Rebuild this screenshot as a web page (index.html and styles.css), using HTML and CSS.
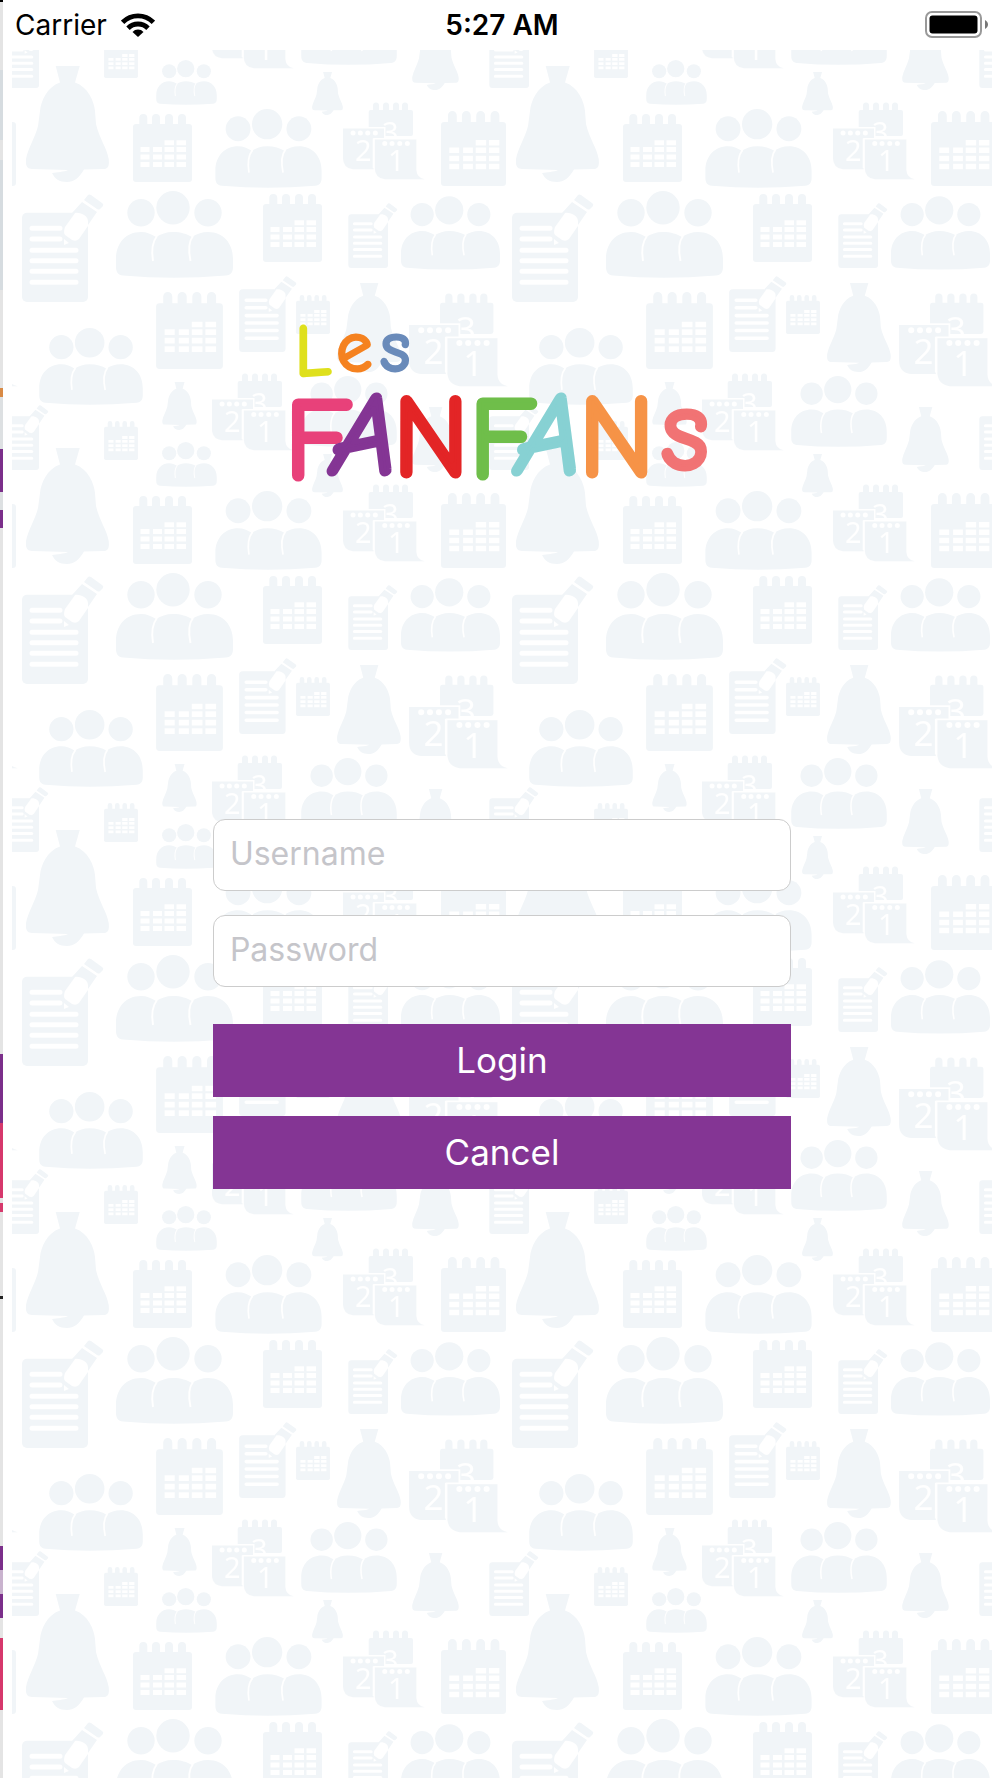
FILE: index.html
```html
<!DOCTYPE html>
<html lang="en">
<head>
<meta charset="utf-8">
<meta name="viewport" content="width=device-width, initial-scale=1">
<title>Les Fanfans - Login</title>
<link rel="stylesheet" href="styles.css">
</head>
<body>
<div class="previous-screen" aria-hidden="true"></div>
<div class="screen">
  <header class="status-bar">
    <div class="carrier">
      <span>Carrier</span>
      <svg class="wifi" viewBox="0 0 34 24" aria-hidden="true">
        <path d="M1.6 9.4A21.6 21.6 0 0 1 32.4 9.4M7 15.2A14 14 0 0 1 27 15.2" fill="none" stroke="#000" stroke-width="4.8"/>
        <path d="M11.500 19A7.4 7.4 0 0 1 22.500 19L17 24Z"/>
      </svg>
    </div>
    <time class="clock">5:27 AM</time>
    <svg class="battery" viewBox="0 0 64 28" aria-hidden="true">
      <rect x="1" y="1" width="55" height="25" rx="6" fill="none" stroke="#999" stroke-width="2"/>
      <rect x="4.500" y="4.500" width="48" height="18" rx="3"/>
      <path d="M60 9C64 11 64 16 60 18Z" fill="#777"/>
    </svg>
  </header>

  <main class="content">
    <svg class="wallpaper" aria-hidden="true">
      <defs>
        <symbol id="bell" viewBox="0 0 83 116">
          <path d="M29.700 0H53.700L49 16.500C62 21 68 35 69 45L70 58C73 72 81 82 82.700 93C83.500 100 82 103 78 103L58 103.500C53 112 48 116 41 116C33 116 29 113 26 107C31 106 38 106 42 104L6 103C1 103 -.5 100 0 93C2 82 9 72 12 60L14 45C15 35 21 21 34 16.500Z"/>
        </symbol>
        <symbol id="calendar" viewBox="0 0 59 68">
          <rect y="10" width="59" height="58" rx="3"/>
          <path d="M10.300 4V14M23 4V14M36 4V14M49 4V14" class="rings"/>
          <path d="M31.500 28.700H41M43.500 28.700H53M7.500 35.500H16.500M20 35.500H29M31.500 35.500H41M43.500 35.500H53M7.500 43H16.500M20 43H29M31.500 43H41M43.500 43H53M7.500 50.400H16.500M20 50.400H29M31.500 50.400H41M43.500 50.400H53" class="cells"/>
        </symbol>
        <symbol id="group" viewBox="0 0 117 87">
          <circle cx="25" cy="21.700" r="13.700"/>
          <circle cx="57" cy="16.700" r="16.700"/>
          <circle cx="92" cy="21.700" r="13.700"/>
          <path d="M0 76V68C0 52 10 41 25 41C31 41 35 43 40 46C45 43 50 41 57 41C65 41 71 43 76 46C80 43 86 41 92 41C107 41 117 52 117 68V76C117 81 115 84 110 84.500Q57 89 7 84.500C2 84 0 81 0 76Z"/>
          <path d="M41 45C37 50 35 58 37 70M77 45C73 50 72 58 74.500 70" class="gaps"/>
        </symbol>
        <symbol id="note" viewBox="0 0 82 108">
          <rect y="18.700" width="66" height="89.300" rx="5"/>
          <path d="M10 34.300H38M10 45H38M10 56.300H54M10 66.700H54M10 77.300H54M10 88.300H54" class="lines"/>
          <path d="M60 8L75 18L66 31L50 19ZM62 6L66 1Q67 0 69 1L80 9Q82 10 81 12L78 15Q77 16 75 15Z"/>
          <path d="M53 19C59 18 66 22 66 27V32L57 45Q54 48 50 46L43 41Q41 38 43 33ZM42 45L47 49L42 51Z" class="blank"/>
        </symbol>
        <symbol id="dates" viewBox="0 0 82 78">
          <rect x="25.700" y="8" width="44.300" height="26" rx="2"/>
          <path d="M33 3.500V12M43 3.500V12M53 3.500V12M62 3.500V12" class="rings small"/>
          <path d="M0 26.600H41V67.300H10Q0 66 0 56Z" class="page"/>
          <text x="39" y="41">3</text>
          <path d="M31.700 37.500H73.300V68Q74 76 81.700 77.300H42Q31.700 76 31.700 65Z" class="page"/>
          <path d="M10 31H10.100M17.300 31H17.400M24.700 31H24.800M32.300 31H32.400M41.700 41.500H41.800M49 41.500H49.100M56.700 41.500H56.800M64.300 41.500H64.400" class="dots"/>
          <text x="12" y="59">2</text>
          <path d="M30.700 66V36.500" class="gaps"/>
          <text x="45" y="68.500">1</text>
        </symbol>
        <pattern id="tile" width="490" height="382" patternUnits="userSpaceOnUse">
          <use href="#bell" x="14" y="16" width="83" height="116"/>
          <use href="#bell" x="300" y="22" width="31" height="43"/>
          <use href="#bell" x="400" y="-25" width="47" height="65"/>
          <use href="#bell" x="400" y="357" width="47" height="65"/>
          <use href="#bell" x="325" y="233" width="64" height="89"/>
          <use href="#bell" x="150" y="332" width="35" height="48"/>
          <use href="#calendar" x="121" y="64" width="59" height="68"/>
          <use href="#calendar" x="251" y="144" width="59" height="68"/>
          <use href="#calendar" x="429" y="61" width="65" height="75"/>
          <use href="#calendar" x="-61" y="61" width="65" height="75"/>
          <use href="#calendar" x="144" y="242" width="67" height="77"/>
          <use href="#calendar" x="92" y="-11" width="34" height="39"/>
          <use href="#calendar" x="92" y="371" width="34" height="39"/>
          <use href="#calendar" x="284" y="245" width="34" height="39"/>
          <use href="#group" x="144" y="10" width="61" height="45"/>
          <use href="#group" x="203" y="59" width="107" height="79"/>
          <use href="#group" x="104" y="141" width="117" height="87"/>
          <use href="#group" x="389" y="146" width="99" height="74"/>
          <use href="#group" x="27" y="278" width="104" height="77"/>
          <use href="#group" x="289" y="-56" width="96" height="71"/>
          <use href="#group" x="289" y="326" width="96" height="71"/>
          <use href="#note" x="10" y="144" width="82" height="108"/>
          <use href="#note" x="336" y="153" width="50" height="65"/>
          <use href="#note" x="227" y="226" width="58" height="76"/>
          <use href="#note" x="-13" y="-27" width="50" height="65"/>
          <use href="#note" x="-13" y="355" width="50" height="65"/>
          <use href="#note" x="477" y="-27" width="50" height="65"/>
          <use href="#note" x="477" y="355" width="50" height="65"/>
          <use href="#dates" x="331" y="52" width="82" height="78"/>
          <use href="#dates" x="397" y="243" width="99" height="94"/>
          <use href="#dates" x="-93" y="243" width="99" height="94"/>
          <use href="#dates" x="200" y="-59" width="82" height="78"/>
          <use href="#dates" x="200" y="323" width="82" height="78"/>
        </pattern>
      </defs>
      <rect width="100%" height="100%" fill="url(#tile)"/>
    </svg>

    <h1 class="logo">
      <svg viewBox="0 0 420 170" role="img" aria-label="Les Fanfans">
        <g class="logo-small">
          <text x="4" y="60" color="#dfe01d">L</text>
          <text x="45" y="56" color="#f58220">e</text>
          <text x="89" y="56" color="#6a8bba">s</text>
        </g>
        <g class="logo-large">
          <text x="-6" y="162" color="#e8417a">F</text>
          <text x="40" y="158" color="#843594" class="slanted">A</text>
          <text x="102" y="159" color="#e32526">N</text>
          <text x="178" y="161" color="#6fbe4a">F</text>
          <text x="224" y="158" color="#87d1d3" class="slanted">A</text>
          <text x="287" y="159" color="#f69347">N</text>
          <text x="369" y="152" color="#f17374" class="last">s</text>
        </g>
      </svg>
    </h1>

    <form class="login-form">
      <input class="field" type="text" name="username" placeholder="Username" aria-label="Username">
      <input class="field" type="password" name="password" placeholder="Password" aria-label="Password">
      <div class="actions">
        <button class="action" type="submit">Login</button>
        <button class="action" type="button">Cancel</button>
      </div>
    </form>
  </main>
</div>
</body>
</html>
```
FILE: styles.css
```css
* {
  box-sizing: border-box;
}

body {
  margin: 0;
  min-height: 100vh;
  display: grid;
  grid-template-columns: 3px 1fr;
  background: #fff;
  font-family: Inter, "Liberation Sans", sans-serif;
}

/* Edge of the screen that the login view slides over */
.previous-screen {
  background: linear-gradient(
    #000 2px, #e4e4e4 2px 70px,
    #d6dce0 70px 140px, #e4e4e4 140px 160px,
    #d6dce0 160px 290px, #e4e4e4 290px 388px,
    #d88a45 388px 397px, #dde0e2 397px 449px,
    #7b2f8a 449px 492px, #dde0e2 492px 510px,
    #7b2f8a 510px 528px, #e4e4e4 528px 1054px,
    #7b2f8a 1054px 1123px, #d6386c 1123px 1198px,
    #e4e4e4 1198px 1203px, #d6386c 1203px 1212px,
    #e4e4e4 1212px 1296px, #222 1296px 1299px,
    #e4e4e4 1299px 1546px, #7b2f8a 1546px 1570px,
    #c9b3ce 1570px 1594px, #7b2f8a 1594px 1618px,
    #e4e4e4 1618px 1638px, #d6386c 1638px 1710px,
    #e4e4e4 1710px
  );
}

.screen {
  display: flex;
  flex-direction: column;
}

.status-bar {
  height: 50px;
  padding: 0 11px 0 12px;
  display: grid;
  grid-template-columns: 1fr auto 1fr;
  align-items: center;
  font-size: 28px;
  line-height: 32px;
  color: #000;
}

.carrier {
  display: flex;
  align-items: center;
  gap: 14px;
}

.wifi {
  width: 34px;
  height: 24px;
}

.clock {
  font-weight: 600;
}

.battery {
  width: 64px;
  height: 28px;
  justify-self: end;
}

.content {
  position: relative;
  flex: 1;
  margin: 0 8px 0 9px;
  display: flex;
  flex-direction: column;
  align-items: center;
}

.wallpaper {
  position: absolute;
  inset: 0;
  width: 100%;
  height: 100%;
  z-index: -1;
  fill: #f1f5f8;
}

.wallpaper text {
  font: 29px "Noto Sans", sans-serif;
  fill: #fff;
}

.rings {
  stroke: #f1f5f8;
  stroke-width: 8;
  stroke-linecap: round;
}

.rings.small {
  stroke-width: 6;
}

.cells {
  stroke: #fff;
  stroke-width: 5;
}

.lines {
  stroke: #fff;
  stroke-width: 5;
  stroke-linecap: round;
}

.gaps {
  fill: none;
  stroke: #fff;
  stroke-width: 2;
}

.blank {
  fill: #fff;
}

.page {
  stroke: #fff;
  stroke-width: 3;
  paint-order: stroke;
}

.dots {
  stroke: #fff;
  stroke-width: 5;
  stroke-linecap: round;
}

.logo {
  width: 43%;
  margin: 265px 0 333px;
}

.logo svg {
  display: block;
  width: 100%;
  overflow: visible;
}

.logo text {
  font-family: "Comic Sans MS", "Comic Neue", Lato, sans-serif;
  font-weight: 400;
  fill: currentColor;
  stroke: currentColor;
  stroke-linejoin: round;
}

.logo-small text {
  font-size: 72px;
  stroke-width: 3;
}

.logo-large text {
  font-size: 114px;
  stroke-width: 5;
}

.logo-large .slanted {
  font-style: italic;
}

.login-form {
  width: 59%;
  display: flex;
  flex-direction: column;
  gap: 24px;
}

.field {
  width: 100%;
  height: 72px;
  padding: 0 16px 2px;
  border: 1px solid #ccc;
  border-radius: 12px;
  background: #fff;
  font: 32px Inter, "Liberation Sans", sans-serif;
  color: #000;
}

.field::placeholder {
  color: #c5c5ca;
  opacity: 1;
}

.actions {
  display: grid;
  gap: 19px;
  padding-top: 13px;
}

.action {
  height: 73px;
  border: 0;
  background: #843594;
  font: 35px Inter, "Liberation Sans", sans-serif;
  color: #fff;
}
```
